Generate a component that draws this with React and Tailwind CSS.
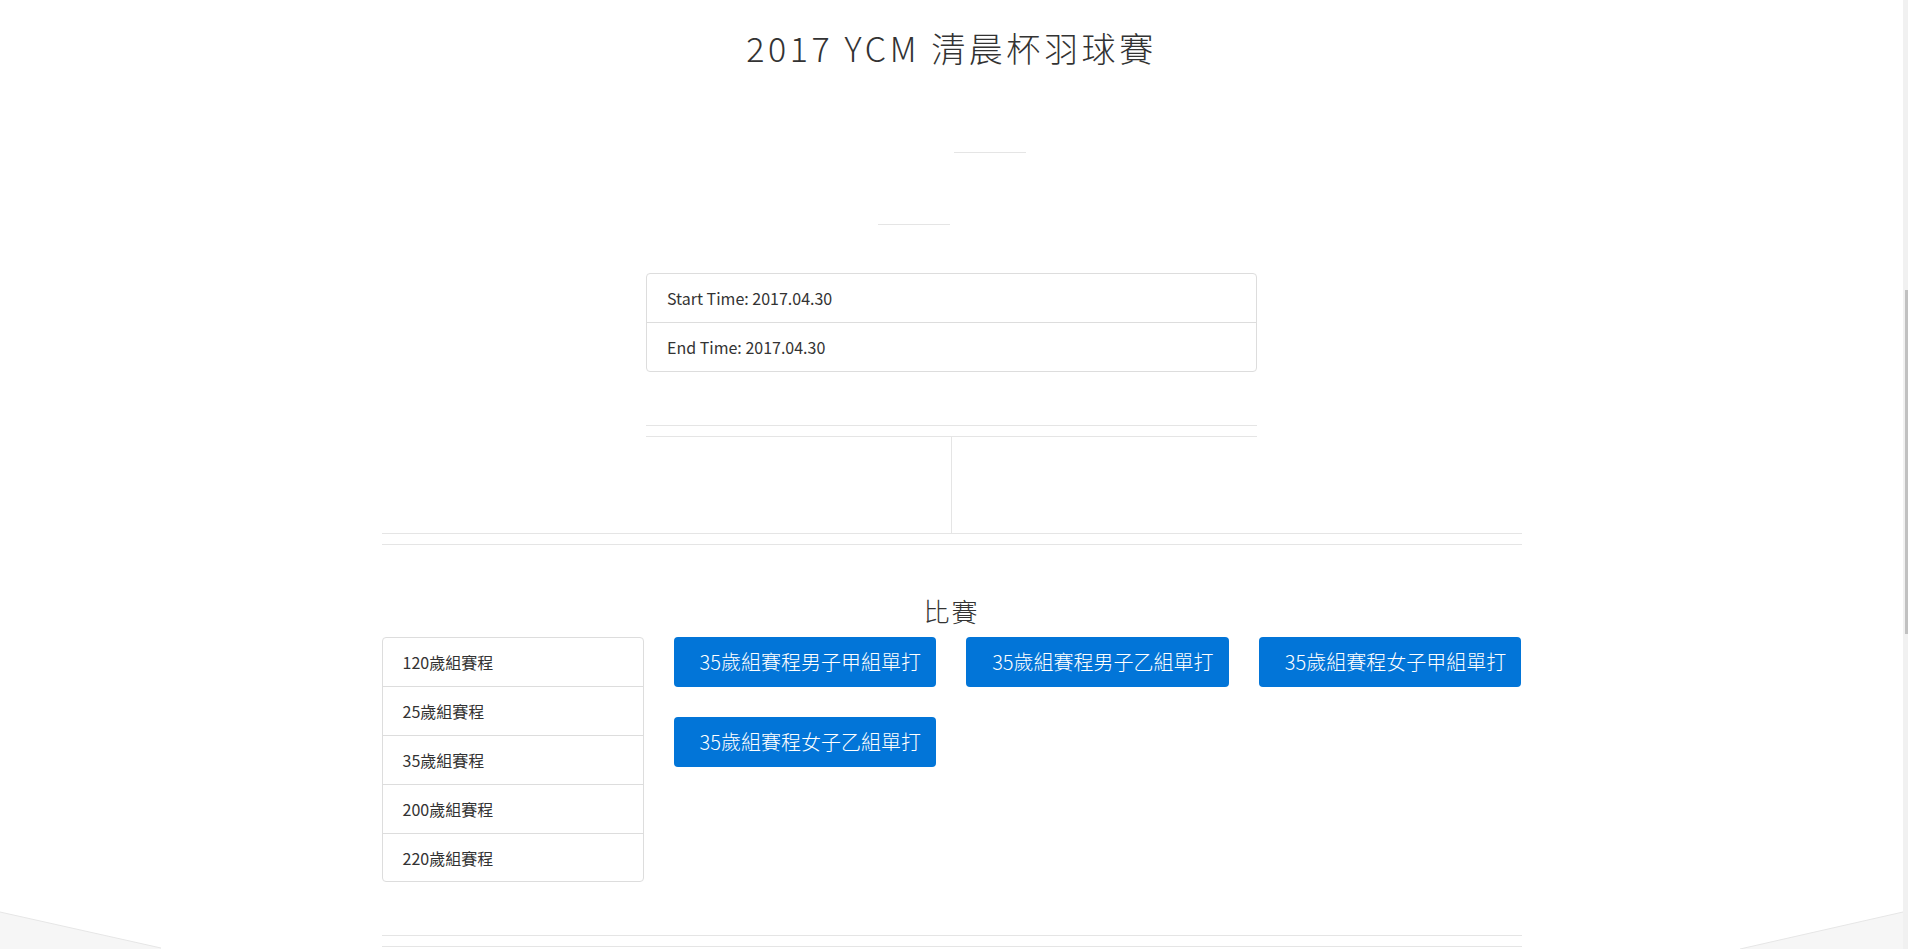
import React from "react";

const matches = [
  "35歲組賽程男子甲組單打",
  "35歲組賽程男子乙組單打",
  "35歲組賽程女子甲組單打",
  "35歲組賽程女子乙組單打",
];

const groups = ["120歲組賽程", "25歲組賽程", "35歲組賽程", "200歲組賽程", "220歲組賽程"];

function Corner({ side }) {
  // grey wedge in the bottom corners
  if (side === "left") {
    return (
      <svg className="absolute left-0 bottom-0" width="170" height="40" viewBox="0 0 170 40">
        <polygon points="0,3 161,39 161,40 0,40" fill="#f6f6f6" />
        <line x1="0" y1="3" x2="161" y2="39" stroke="#e6e6e6" strokeWidth="1" />
      </svg>
    );
  }
  return (
    <svg className="absolute right-0 bottom-0" width="170" height="40" viewBox="0 0 170 40">
      <polygon points="7,40 170,3 170,40" fill="#f6f6f6" />
      <line x1="7" y1="40" x2="170" y2="3" stroke="#e6e6e6" strokeWidth="1" />
    </svg>
  );
}

export default function App() {
  return (
    <div
      className="flex h-[949px] w-full overflow-hidden bg-white text-[#333]"
      style={{ fontFamily: '"Noto Sans CJK TC", "Noto Sans", sans-serif' }}
    >
      <div className="relative flex flex-1 flex-col items-center">
        <h1 className="mt-[28px] text-[34px] leading-[40px] tracking-[3.6px] font-light">
          2017 YCM 清晨杯羽球賽
        </h1>

        <div className="ml-[77px] mt-[84px] h-px w-[72px] bg-[#e5e5e5]" />
        <div className="mr-[75px] mt-[71px] h-px w-[72px] bg-[#e5e5e5]" />

        <div className="mt-[48px] w-[611px] rounded border border-[#dddddd] text-[16px]">
          <div className="flex h-[49px] items-center border-b border-[#dddddd] pl-5">
            Start Time: 2017.04.30
          </div>
          <div className="flex h-[48px] items-center pl-5">End Time: 2017.04.30</div>
        </div>

        <div className="mt-[53px] h-[11px] w-[611px] border-t border-[#e5e5e5]" />
        <div className="grid h-[97px] w-[611px] grid-cols-2 border-t border-[#e5e5e5]">
          <div className="border-r border-[#e5e5e5]" />
          <div />
        </div>
        <div className="h-[12px] w-[1140px] border-y border-[#e5e5e5]" />

        <h2 className="mt-[50px] text-[26px] leading-[32px] tracking-[2px] font-light">比賽</h2>

        <div className="mt-[10px] flex w-[1140px] items-start gap-[30px]">
          <div className="w-[262px] shrink-0 rounded border border-[#dddddd] text-[16px]">
            {groups.map((g, i) => (
              <div
                key={g}
                className={
                  i < groups.length - 1
                    ? "flex h-[49px] items-center border-b border-[#dddddd] pl-5"
                    : "flex h-[47px] items-center pl-5"
                }
              >
                {g}
              </div>
            ))}
          </div>
          <div className="grid flex-1 grid-cols-3 gap-[30px]">
            {matches.map((m) => (
              <button
                key={m}
                className="flex h-[50px] items-center rounded bg-[#0275d8] pl-[26px] text-[20px] font-light text-white"
              >
                {m}
              </button>
            ))}
          </div>
        </div>

        <div className="mt-[53px] h-[12px] w-[1140px] border-y border-[#e5e5e5]" />

        <Corner side="left" />
        <Corner side="right" />
      </div>

      <div className="flex w-[5px] flex-col items-end bg-[#f1f1f1]">
        <div className="mt-[290px] h-[344px] w-[3px] bg-[#c1c1c1]" />
      </div>
    </div>
  );
}
